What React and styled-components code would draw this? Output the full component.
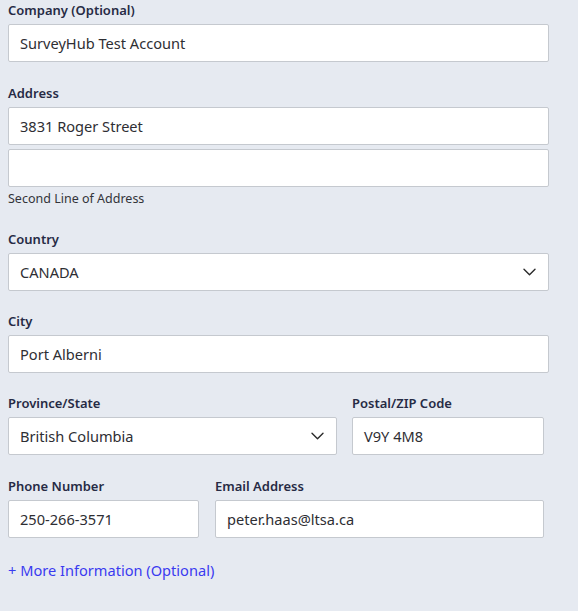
import React from "react";
import styled, { createGlobalStyle } from "styled-components";

const Global = createGlobalStyle`
  html, body { margin: 0; padding: 0; background: #e6eaf1; }
  body { font-family: "Noto Sans", "Open Sans", sans-serif; }
  * { box-sizing: border-box; }
`;

const Form = styled.form`
  padding: 1px 8px 0 8px;
  width: 557px;
`;

const Field = styled.div`
  display: flex;
  flex-direction: column;
  margin-bottom: ${(p) => p.$mb ?? 21}px;
`;

const Label = styled.label`
  font-size: 13px;
  font-weight: 600;
  line-height: 18px;
  color: #262b45;
  margin-bottom: 5px;
`;

const Input = styled.div`
  height: 38px;
  background: #fff;
  border: 1px solid #c5c9cf;
  border-radius: 2px;
  display: flex;
  align-items: center;
  justify-content: space-between;
  padding: 0 12px 0 11px;
  font-size: 14.6px;
  color: #2e2e33;
  margin-top: ${(p) => p.$mt ?? 0}px;
`;

const Help = styled.div`
  font-size: 12.5px;
  line-height: 16px;
  color: #33343a;
  margin-top: 4px;
`;

const Row = styled.div`
  display: grid;
  grid-template-columns: ${(p) => p.$cols};
  column-gap: ${(p) => p.$gap}px;
`;

const Link = styled.a`
  display: block;
  font-size: 14.6px;
  line-height: 20px;
  color: #3a3af0;
  text-decoration: none;
`;

const Chevron = () => (
  <svg width="13" height="8" viewBox="0 0 13 8" fill="none">
    <path d="M1 1.2l5.5 5.5 5.5-5.5" stroke="#2a2a2a" strokeWidth="1.4" strokeLinecap="round" strokeLinejoin="round" />
  </svg>
);

export default function App() {
  return (
    <>
      <Global />
      <Form>
        <Field $mb={22}>
          <Label>Company (Optional)</Label>
          <Input>SurveyHub Test Account</Input>
        </Field>
        <Field $mb={23}>
          <Label>Address</Label>
          <Input>3831 Roger Street</Input>
          <Input $mt={4} />
          <Help>Second Line of Address</Help>
        </Field>
        <Field>
          <Label>Country</Label>
          <Input>
            CANADA
            <Chevron />
          </Input>
        </Field>
        <Field>
          <Label>City</Label>
          <Input>Port Alberni</Input>
        </Field>
        <Row $cols="329px 192px" $gap={15}>
          <Field $mb={22}>
            <Label>Province/State</Label>
            <Input>
              British Columbia
              <Chevron />
            </Input>
          </Field>
          <Field $mb={22}>
            <Label>Postal/ZIP Code</Label>
            <Input>V9Y 4M8</Input>
          </Field>
        </Row>
        <Row $cols="191px 329px" $gap={16}>
          <Field $mb={22}>
            <Label>Phone Number</Label>
            <Input>250-266-3571</Input>
          </Field>
          <Field $mb={22}>
            <Label>Email Address</Label>
            <Input>peter.haas@ltsa.ca</Input>
          </Field>
        </Row>
        <Link href="#">+ More Information (Optional)</Link>
      </Form>
    </>
  );
}
